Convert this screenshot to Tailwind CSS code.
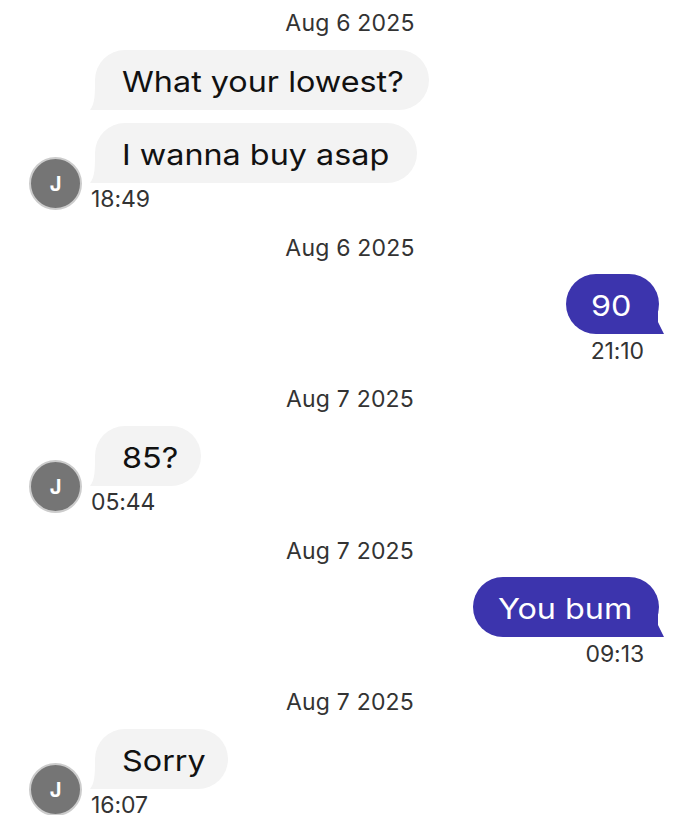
<!DOCTYPE html>
<html lang="en">
  <head>
    <meta charset="UTF-8" />
    <meta name="viewport" content="width=device-width, initial-scale=1.0" />
    <title>Messages</title>
    <script src="https://cdn.jsdelivr.net/npm/@tailwindcss/browser@4"></script>
  </head>
  <body class="bg-white font-['Inter',sans-serif] text-[#111] w-[700px] h-[815px] overflow-hidden">
    <div class="pt-[10px]">
      <!-- Aug 6, incoming -->
      <p class="h-[26px] leading-[26px] text-center text-[23px] text-[#333] tracking-[0.2px]">Aug 6 2025</p>
      <div class="flex items-end pl-[29px] mt-[14px]">
        <div class="w-[53px] h-[53px] rounded-full bg-[#757575] border-2 border-[#ccc] flex items-center justify-center text-white text-[20px] font-bold">J</div>
        <div class="ml-[9px] mb-[1px]">
          <div class="relative ml-[4px] w-[334px] h-[60px] pl-[27px] pt-[3px] flex items-center bg-[#f3f3f3] rounded-[30px] text-[29px]">
            <svg class="absolute left-[-5px] bottom-0" width="36" height="30" viewBox="0 0 36 30"><path d="M5 0 C5 14 5 24 0 30 H36 V0 Z" fill="#f3f3f3" /></svg>
            <span class="relative inline-block origin-left scale-x-[1.115] whitespace-nowrap">What your lowest?</span>
          </div>
          <div class="relative ml-[4px] mt-[13px] w-[322px] h-[60px] pl-[27px] pt-[3px] flex items-center bg-[#f3f3f3] rounded-[30px] text-[29px]">
            <svg class="absolute left-[-5px] bottom-0" width="36" height="30" viewBox="0 0 36 30"><path d="M5 0 C5 14 5 24 0 30 H36 V0 Z" fill="#f3f3f3" /></svg>
            <span class="relative inline-block origin-left scale-x-[1.115] whitespace-nowrap">I wanna buy asap</span>
          </div>
          <p class="mt-[6px] h-[20px] leading-[20px] text-[23px] text-[#333] tracking-[-0.1px]">18:49</p>
        </div>
      </div>

      <!-- Aug 6, outgoing -->
      <p class="mt-[25px] h-[26px] leading-[26px] text-center text-[23px] text-[#333] tracking-[0.2px]">Aug 6 2025</p>
      <div class="flex flex-col items-end pr-[41px] mt-[13px]">
        <div class="relative w-[93px] h-[60px] pl-[25px] pt-[3px] flex items-center bg-[#3c34ad] rounded-[30px] text-white text-[29px]">
          <svg class="absolute right-[-5px] bottom-0" width="36" height="24" viewBox="0 0 36 24"><path d="M30 0 V12 L36 24 H0 V0 Z" fill="#3c34ad" /></svg>
          <span class="relative inline-block origin-left scale-x-[1.115] whitespace-nowrap">90</span>
        </div>
        <p class="mt-[7px] mr-[15px] h-[20px] leading-[20px] text-[23px] text-[#333] tracking-[-0.1px]">21:10</p>
      </div>

      <!-- Aug 7, incoming -->
      <p class="mt-[25px] h-[26px] leading-[26px] text-center text-[23px] text-[#333] tracking-[0.2px]">Aug 7 2025</p>
      <div class="flex items-end pl-[29px] mt-[14px]">
        <div class="w-[53px] h-[53px] rounded-full bg-[#757575] border-2 border-[#ccc] flex items-center justify-center text-white text-[20px] font-bold">J</div>
        <div class="ml-[9px] mb-[1px]">
          <div class="relative ml-[4px] w-[106px] h-[60px] pl-[27px] pt-[3px] flex items-center bg-[#f3f3f3] rounded-[30px] text-[29px]">
            <svg class="absolute left-[-5px] bottom-0" width="36" height="30" viewBox="0 0 36 30"><path d="M5 0 C5 14 5 24 0 30 H36 V0 Z" fill="#f3f3f3" /></svg>
            <span class="relative inline-block origin-left scale-x-[1.115] whitespace-nowrap">85?</span>
          </div>
          <p class="mt-[6px] h-[20px] leading-[20px] text-[23px] text-[#333] tracking-[-0.1px]">05:44</p>
        </div>
      </div>

      <!-- Aug 7, outgoing -->
      <p class="mt-[25px] h-[26px] leading-[26px] text-center text-[23px] text-[#333] tracking-[0.2px]">Aug 7 2025</p>
      <div class="flex flex-col items-end pr-[41px] mt-[13px]">
        <div class="relative w-[186px] h-[60px] pl-[25px] pt-[3px] flex items-center bg-[#3c34ad] rounded-[30px] text-white text-[29px]">
          <svg class="absolute right-[-5px] bottom-0" width="36" height="24" viewBox="0 0 36 24"><path d="M30 0 V12 L36 24 H0 V0 Z" fill="#3c34ad" /></svg>
          <span class="relative inline-block origin-left scale-x-[1.115] whitespace-nowrap">You bum</span>
        </div>
        <p class="mt-[7px] mr-[15px] h-[20px] leading-[20px] text-[23px] text-[#333] tracking-[-0.1px]">09:13</p>
      </div>

      <!-- Aug 7, incoming -->
      <p class="mt-[25px] h-[26px] leading-[26px] text-center text-[23px] text-[#333] tracking-[0.2px]">Aug 7 2025</p>
      <div class="flex items-end pl-[29px] mt-[14px]">
        <div class="w-[53px] h-[53px] rounded-full bg-[#757575] border-2 border-[#ccc] flex items-center justify-center text-white text-[20px] font-bold">J</div>
        <div class="ml-[9px] mb-[1px]">
          <div class="relative ml-[4px] w-[133px] h-[60px] pl-[27px] pt-[3px] flex items-center bg-[#f3f3f3] rounded-[30px] text-[29px]">
            <svg class="absolute left-[-5px] bottom-0" width="36" height="30" viewBox="0 0 36 30"><path d="M5 0 C5 14 5 24 0 30 H36 V0 Z" fill="#f3f3f3" /></svg>
            <span class="relative inline-block origin-left scale-x-[1.115] whitespace-nowrap">Sorry</span>
          </div>
          <p class="mt-[6px] h-[20px] leading-[20px] text-[23px] text-[#333] tracking-[-0.1px]">16:07</p>
        </div>
      </div>
    </div>
  </body>
</html>
